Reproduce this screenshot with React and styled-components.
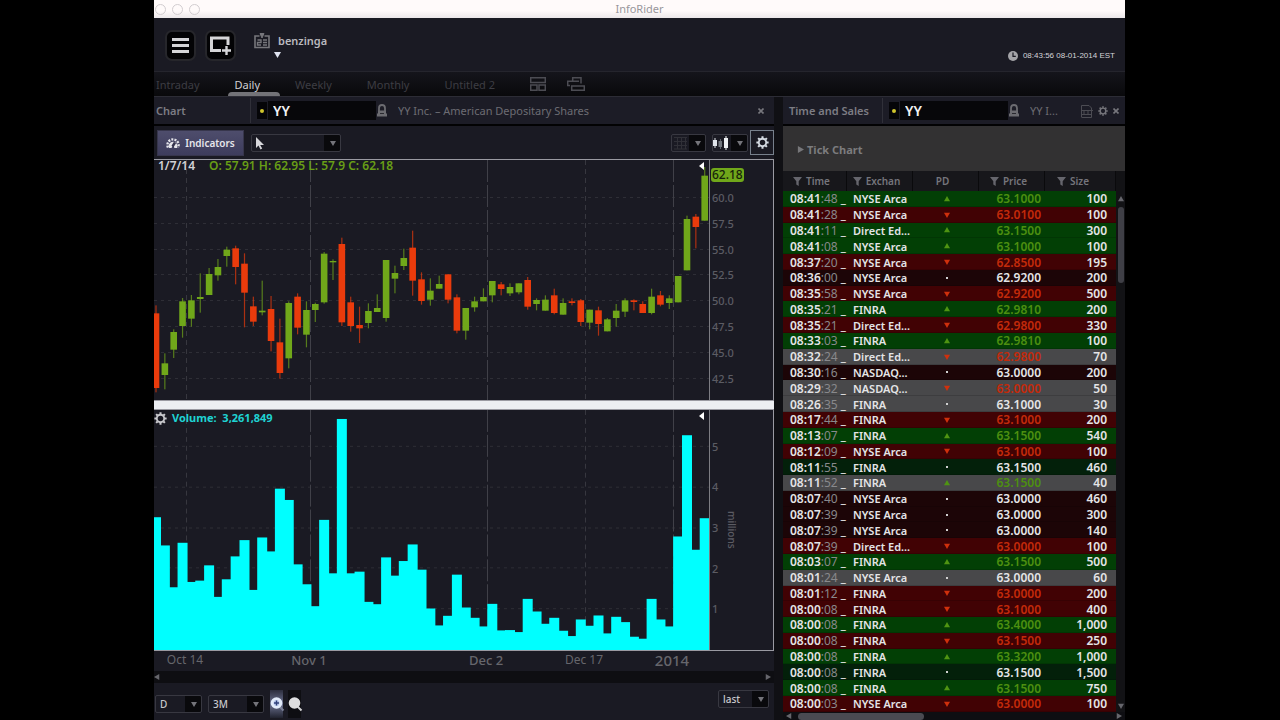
import React from "react";
import styled, { createGlobalStyle, css } from "styled-components";

const Global = createGlobalStyle`
  * { box-sizing: border-box; }
  html, body { margin: 0; background: #000; }
  body { font-family: "Noto Sans", "Open Sans", sans-serif; font-size: 11px; line-height: 16px; color: #85858c; }
  button, input, select { font: inherit; color: inherit; margin: 0; padding: 0; border: 0; background: none; }
  svg { display: block; }
`;

const GREEN = "#70a71a";
const RED = "#ea3b0c";

/* ---------- shell ---------- */
const Screen = styled.div`
  height: 100vh;
  min-height: 600px;
  padding: 0 155px 0 154px;
  display: flex;
  flex-direction: column;
  overflow: hidden;
`;
const TitleBar = styled.header`
  height: 18px;
  flex: none;
  display: grid;
  grid-template-columns: 60px 1fr 60px;
  align-items: center;
  background: linear-gradient(#fffafa 60%, #ece8ea);
  color: #98969a;
  text-align: center;
`;
const Lights = styled.div`
  display: flex;
  gap: 6px;
  padding-left: 1px;
`;
const Light = styled.span`
  width: 11px;
  height: 11px;
  border: 1px solid #d2cdd0;
  border-radius: 50%;
`;
const Header = styled.div`
  height: 54px;
  flex: none;
  display: flex;
  align-items: flex-start;
  padding: 12px 10px 0 11px;
  background: #1a1a23;
  border-bottom: 1px solid #25252d;
`;
const SquareButton = styled.button`
  width: 31px;
  height: 31px;
  margin-right: 9px;
  display: grid;
  place-items: center;
  border: 2px solid #26262b;
  border-radius: 7px;
  background: #030305;
`;
const User = styled.button`
  margin-left: 9px;
  display: grid;
  grid-template-columns: 16px auto;
  column-gap: 8px;
  align-items: center;
  color: #b9b9be;
  font-weight: 600;
  text-align: left;
  padding-top: 3px;
`;
const UserCaret = styled.span`
  grid-column: 1 / 3;
  padding: 2px 0 0 20px;
`;
const Clock = styled.div`
  margin: 20px 0 0 auto;
  display: flex;
  align-items: center;
  gap: 5px;
  font-family: "Liberation Sans Narrow", "Liberation Sans", sans-serif;
  font-size: 8px;
  line-height: 12px;
  color: #d4d4d8;
`;
const Tabs = styled.nav`
  height: 25px;
  flex: none;
  display: flex;
  align-items: center;
  gap: 35px;
  padding-left: 2px;
  background: linear-gradient(#15151b, #09090b);
  border-bottom: 1px solid #2c2c35;
`;
const Tab = styled.button`
  position: relative;
  height: 24px;
  padding-top: 1px;
  color: ${(p) => (p.$on ? "#d0d0d4" : "#3d3d43")};
  ${(p) =>
    p.$on &&
    css`
      &::after {
        content: "";
        position: absolute;
        left: -7px;
        right: -20px;
        bottom: 0;
        height: 4px;
        border-radius: 4px 4px 0 0;
        background: #737378;
      }
    `}
`;
const TabIcons = styled.div`
  display: flex;
  gap: 21px;
`;
const Body = styled.main`
  flex: 1;
  min-height: 0;
  display: grid;
  grid-template-columns: minmax(0, 620px) minmax(0, 342px);
  justify-content: space-between;
  background: #101014;
`;
const Panel = styled.section`
  min-width: 0;
  min-height: 0;
  display: flex;
  flex-direction: column;
  background: #1a1a23;
`;
const PanelHead = styled.div`
  height: 29px;
  flex: none;
  display: flex;
  align-items: center;
  padding: 0 ${(p) => (p.$wide ? 10 : 6)}px 0 ${(p) => (p.$wide ? 2 : 6)}px;
  border-bottom: 2px solid #020203;
  background: #1c1c26;
  color: #77777e;
`;
const PanelTitle = styled.h2`
  margin: 0;
  width: ${(p) => (p.$wide ? 95 : 94)}px;
  height: 25px;
  line-height: 25px;
  font-size: 11px;
  font-weight: 600;
  border-right: 1px solid #303039;
  color: #7d7d84;
  white-space: nowrap;
`;
const Status = styled.span`
  width: 10px;
  height: 17px;
  margin: 0 1px 0 6px;
  display: grid;
  place-items: center;
  background: #050508;
  &::after {
    content: "";
    width: 4px;
    height: 4px;
    border-radius: 50%;
    background: #cfc42c;
  }
`;
const Symbol = styled.input`
  width: 108px;
  height: 19px;
  padding: 0 0 0 5px;
  margin-right: 1px;
  background: #07070a;
  color: #f2f2f4;
  font-size: 14px;
  font-weight: 600;
`;
const Company = styled.span`
  flex: 1;
  min-width: 0;
  margin-left: 11px;
  white-space: nowrap;
  overflow: hidden;
  text-overflow: ellipsis;
  color: #6c6c73;
`;
const IconButton = styled.button`
  flex: none;
  margin-left: 5px;
  color: #77777d;
`;

/* ---------- chart panel ---------- */
const Tools = styled.div`
  height: 33px;
  flex: none;
  display: flex;
  align-items: center;
  padding: 0 0 0 3px;
`;
const Indicators = styled.button`
  width: 87px;
  height: 26px;
  display: flex;
  align-items: center;
  justify-content: center;
  gap: 5px;
  margin-right: 7px;
  background: linear-gradient(#4e4d6c, #3d3c5c);
  border: 1px solid #37364c;
  color: #e6e6ec;
  font-weight: 600;
  font-size: 10px;
`;
const SelectBox = styled.label`
  position: relative;
  flex: none;
  width: ${(p) => p.$w}px;
  height: 18px;
  display: flex;
  align-items: center;
  border: 1px solid #383841;
  border-radius: 2px;
  background: linear-gradient(90deg, transparent calc(100% - 16px), #09090c 0);
  margin-right: ${(p) => p.$gap ?? 0}px;
  select {
    position: absolute;
    inset: 0;
    width: 100%;
    appearance: none;
    padding-left: 4px;
    font-size: 10px;
    font-weight: 500;
    color: ${(p) => (p.$blank ? "transparent" : "#c8c8cc")};
    outline: 0;
  }
  &::after {
    content: "";
    position: absolute;
    right: 4px;
    top: 6px;
    border: 3px solid transparent;
    border-top: 5px solid #74747a;
    border-bottom: 0;
  }
`;
const ToolSpacer = styled.span`
  flex: 1;
`;
const GearButton = styled.button`
  width: 24px;
  height: 25px;
  display: grid;
  place-items: center;
  border: 1px solid #77808c;
  color: #d5dbe3;
`;
const Frame = styled.div`
  flex: 1 1 0;
  min-height: 0;
  position: relative;
  display: grid;
  grid-template-columns: minmax(0, 555px) minmax(64px, 1fr);
  border: 1px solid #9a9aa2;
  border-left: 0;
`;
const Plot = styled.svg`
  width: 100%;
  height: 100%;
`;
const Axis = styled.div`
  position: relative;
  border-left: 1px solid #7c7c82;
  color: #5c5c63;
  font-weight: 500;
`;
const Tick = styled.span`
  position: absolute;
  left: 2px;
  margin-top: -8px;
`;
const LastPrice = styled.span`
  position: absolute;
  left: 1px;
  top: 8px;
  padding: 0 1px;
  height: 14px;
  line-height: 14px;
  font-size: 12px;
  border-radius: 3px;
  background: ${GREEN};
  color: #16230a;
`;
const Unit = styled.span`
  position: absolute;
  left: 14px;
  top: 101px;
  writing-mode: vertical-rl;
  font-size: 10px;
`;
const Legend = styled.div`
  position: absolute;
  left: ${(p) => (p.$volume ? 0 : 4)}px;
  top: ${(p) => (p.$volume ? 0 : -2)}px;
  display: flex;
  align-items: center;
  gap: ${(p) => (p.$volume ? 5 : 14)}px;
  font-size: ${(p) => (p.$volume ? 11 : 12)}px;
  font-weight: ${(p) => (p.$volume ? 700 : 600)};
  white-space: pre;
  color: ${(p) => (p.$volume ? "#1fd3d3" : "#689e16")};
`;
const LegendDate = styled.span`
  color: #d2d2d6;
`;
const LegendIcon = styled.span`
  color: #c9c9cd;
`;
const Splitter = styled.div`
  height: 8px;
  flex: none;
  background: #eceef2;
`;
const Dates = styled.div`
  position: relative;
  height: 20px;
  flex: none;
`;
const DateLabel = styled.span`
  position: absolute;
  top: 1px;
  transform: translateX(-50%);
  font-size: ${(p) => ({ day: 12, month: 13, year: 15 })[p.$rank]}px;
  font-weight: ${(p) => (p.$rank === "day" ? 400 : 500)};
  color: #66666c;
`;
const ScrollTrack = styled.div`
  height: ${(p) => p.$h}px;
  flex: none;
  display: flex;
  align-items: center;
  justify-content: space-between;
  padding: 0 3px 0 ${(p) => (p.$h > 8 ? 0 : 3)}px;
  background: #0e0e12;
`;
const Footer = styled.div`
  height: 37px;
  flex: none;
  display: flex;
  align-items: center;
  padding: 5px 5px 0 1px;
`;
const RaisedSelect = styled.div`
  align-self: flex-start;
  padding-top: 2px;
`;
const ZoomButton = styled.button`
  width: 13px;
  height: 28px;
  margin-right: 5px;
  display: grid;
  place-items: center;
  background: ${(p) => (p.$on ? "linear-gradient(#2c2e3e, #6b7190, #20222e)" : "#0e0e12")};
`;

/* ---------- time and sales ---------- */
const TickChart = styled.button`
  height: 45px;
  flex: none;
  display: flex;
  align-items: center;
  gap: 3px;
  padding: 2px 0 0 14px;
  background: #323132;
  color: #7c7c7e;
  font-size: 11px;
  font-weight: 700;
`;
const TableArea = styled.div`
  flex: 1;
  min-height: 0;
  display: flex;
`;
const columns = css`
  display: grid;
  grid-template-columns: 64px 66px 66px 66px minmax(0, 1fr);
  align-items: center;
`;
const Table = styled.table`
  flex: 1;
  min-width: 0;
  display: flex;
  flex-direction: column;
  font-weight: 600;
`;
const Head = styled.thead`
  height: 20px;
  flex: none;
  tr {
    ${columns}
    background: #17171b;
  }
  th {
    height: 20px;
    display: flex;
    align-items: center;
    justify-content: center;
    gap: 4px;
    padding: 0 6px 0 0;
    font-weight: 600;
    font-size: 10px;
    border-right: 1px solid #0a0a0c;
    color: #75757c;
  }
  th:last-child {
    padding-right: 14px;
  }
`;
const Rows = styled.tbody`
  flex: 1;
  min-height: 0;
  display: flex;
  flex-direction: column;
`;
const rowFill = { G: "#023f05", R: "#410204", r: "#1c0507", g: "#03200a", w: "#48484a" };
const Row = styled.tr`
  ${columns}
  flex: 1 1 0;
  min-height: 0;
  background: ${(p) => rowFill[p.$fill]};
  box-shadow: inset 0 -1px rgba(0, 0, 0, 0.14);
`;
const Cell = styled.td`
  padding: 0 ${(p) => p.$right ?? 0}px 0 ${(p) => p.$left ?? 0}px;
  line-height: 15px;
  font-size: ${(p) => p.$size ?? 11}px;
  text-align: ${(p) => p.$align ?? "left"};
  color: ${(p) => p.$color ?? "#e4e4e6"};
  white-space: nowrap;
`;
const Seconds = styled.span`
  font-weight: 400;
  color: #89898c;
`;
const VScroll = styled.div`
  width: 9px;
  flex: none;
  display: flex;
  flex-direction: column;
  align-items: center;
  padding: 25px 0 3px;
  background: #121215;
`;
const VThumb = styled.span`
  width: 6px;
  height: 76px;
  margin: 5px 0 auto;
  border-radius: 3px;
  background: #3f3f46;
`;
const HThumb = styled.span`
  width: 126px;
  height: 7px;
  margin: 0 auto 0 6px;
  border-radius: 4px;
  background: #4a4a51;
`;

/* ---------- icons ---------- */
const Tri = ({ dir = "down", size = 6, fill = "#66666c" }) => {
  const d = { down: "M0 1H8L4 8Z", up: "M0 7H8L4 0Z", left: "M7 0V8L0 4Z", right: "M1 0V8L8 4Z" }[dir];
  return (
    <svg width={size} height={size} viewBox="0 0 8 8" aria-hidden="true">
      <path d={d} fill={fill} />
    </svg>
  );
};
const Gear = ({ size = 13 }) => (
  <svg width={size} height={size} viewBox="0 0 14 14" fill="none" stroke="currentColor" aria-hidden="true">
    <circle cx="7" cy="7" r="4" strokeWidth="2" />
    <path d="M7 .4V2.5M7 11.5V13.6M.4 7H2.5M11.5 7H13.6M2.3 2.3 3.8 3.8M10.2 10.2 11.7 11.7M2.3 11.7 3.8 10.2M10.2 3.8 11.7 2.3" strokeWidth="2.2" />
  </svg>
);
const Lock = () => (
  <svg width="10" height="13" viewBox="0 0 10 13" aria-label="Locked">
    <path d="M2 8V4.2a3 3.2 0 0 1 6 0V8" fill="none" stroke="#6c6c71" strokeWidth="1.8" />
    <path d="M1 6.5H9V9.5H10V12.5H0V9.5H1Z" fill="#6c6c71" />
    <path d="M3 9.5H7" stroke="#2a2a30" />
  </svg>
);
const Cross = () => (
  <svg width="6" height="6" viewBox="0 0 6 6" stroke="currentColor" strokeWidth="1.6" aria-hidden="true">
    <path d="M.5.5 5.5 5.5M5.5.5.5 5.5" />
  </svg>
);
const Funnel = () => (
  <svg width="9" height="9" viewBox="0 0 9 9" aria-hidden="true">
    <path d="M0 0H9L5.7 4.2V9L3.3 7.5V4.2Z" fill="#66666d" />
  </svg>
);
const Magnifier = ({ plus }) => (
  <svg width="15" height="16" viewBox="0 0 15 16" aria-hidden="true">
    <path d="M9 10 13.5 14.5" stroke={plus ? "#7c8198" : "#d4d4d6"} strokeWidth="2" />
    <circle cx="6.5" cy="7" r="5.8" fill={plus ? "#e2ebfa" : "#dededf"} />
    {plus && <circle cx="6.5" cy="7" r="3" fill="#b9c8ec" />}
    {plus && <path d="M6.5 4.5V9.5M4 7H9" stroke="#30407a" strokeWidth="1.4" />}
  </svg>
);

/* ---------- data ---------- */
/* side, then body top, body bottom, wick top, wick bottom in thirds of a plot unit */
const CANDLES = [
  "R 400 624 376 637", "G 550 585 520 628", "G 456 509 448 534", "G 364 438 354 473", "G 361 416 345 440",
  "G 351 357 280 398", "G 282 345 264 345", "G 261 286 237 302", "G 209 228 200 260", "R 205 261 197 313",
  "R 251 338 220 442", "R 379 425 350 438", "G 392 397 302 406", "R 387 483 348 514", "R 487 579 416 596",
  "G 369 535 364 565", "R 350 443 340 463", "G 390 464 364 502", "G 372 390 368 426", "G 221 367 216 371",
  "G 243 247 238 300", "R 192 427 173 438", "R 367 438 350 455", "R 435 445 380 489", "G 393 429 370 445",
  "G 384 396 343 396", "G 240 414 240 425", "G 279 296 257 340", "G 234 258 206 270", "R 203 302 152 347",
  "R 298 363 277 374", "G 332 359 295 377", "G 312 326 287 326", "R 283 359 283 370", "R 352 452 343 460",
  "G 384 452 384 479", "G 364 382 350 395", "G 351 364 325 364", "G 303 346 303 367", "R 313 327 306 346",
  "G 321 340 310 348", "G 310 337 310 343", "R 300 380 291 389", "G 360 372 355 391", "G 359 392 346 392",
  "R 346 399 326 403", "G 369 404 355 404", "R 364 369 355 376", "R 361 426 357 438", "G 389 428 389 448",
  "R 391 432 380 467", "G 418 454 414 454", "G 392 414 372 440", "G 361 395 355 411", "R 361 366 358 391",
  "R 372 399 364 399", "G 350 399 326 403", "R 346 374 333 379", "G 355 369 346 387", "G 288 367 288 367",
  "G 117 271 107 271", "R 110 141 102 205", "G -13 122 -39 122",
].map((s) => {
  const [side, ...v] = s.split(" ");
  const [top, bottom, high, low] = v.map((n) => 20 + n / 3);
  return { side, top, bottom, high, low };
});
const VOLUMES = [
  350, 435, 561, 427, 545, 541, 495, 590, 537, 468, 419, 569, 411, 453, 264, 298, 492, 552, 618, 358, 519, 54, 519,
  514, 605, 612, 471, 526, 482, 432, 508, 625, 676, 647, 523, 622, 653, 679, 611, 691, 690, 696, 596, 634, 671, 653,
  692, 708, 658, 677, 646, 700, 650, 666, 710, 716, 596, 658, 679, 408, 103, 448, 353,
];
const centre = (i) => 2 + i * 8.85;
const PRICES = [60, 57.5, 55, 52.5, 50, 47.5, 45, 42.5].map((p) => ({ p, y: 38 + (60 - p) * 10.33 }));
const MILLIONS = [5, 4, 3, 2, 1].map((m) => ({ m, y: 37 + (5 - m) * 40.8 }));
const DATES = [
  { x: 31, text: "Oct 14", rank: "day" },
  { x: 155, text: "Nov 1", rank: "month" },
  { x: 332, text: "Dec 2", rank: "month" },
  { x: 430, text: "Dec 17", rank: "day" },
  { x: 518, text: "2014", rank: "year" },
];
const TRADES = `08:41:48|NYSE Arca|up|63.1000|100|G
08:41:28|NYSE Arca|down|63.0100|100|R
08:41:11|Direct Ed...|up|63.1500|300|G
08:41:08|NYSE Arca|up|63.1000|100|G
08:37:20|NYSE Arca|down|62.8500|195|R
08:36:00|NYSE Arca|flat|62.9200|200|r
08:35:58|NYSE Arca|down|62.9200|500|R
08:35:21|FINRA|up|62.9810|200|G
08:35:21|Direct Ed...|down|62.9800|330|R
08:33:03|FINRA|up|62.9810|100|G
08:32:24|Direct Ed...|down|62.9800|70|w
08:30:16|NASDAQ...|flat|63.0000|200|r
08:29:32|NASDAQ...|down|63.0000|50|w
08:26:35|FINRA|flat|63.1000|30|w
08:17:44|FINRA|down|63.1000|200|R
08:13:07|FINRA|up|63.1500|540|G
08:12:09|NYSE Arca|down|63.1000|100|R
08:11:55|FINRA|flat|63.1500|460|g
08:11:52|FINRA|up|63.1500|40|w
08:07:40|NYSE Arca|flat|63.0000|460|r
08:07:39|NYSE Arca|flat|63.0000|300|r
08:07:39|NYSE Arca|flat|63.0000|140|r
08:07:39|Direct Ed...|down|63.0000|100|R
08:03:07|FINRA|up|63.1500|500|G
08:01:24|NYSE Arca|flat|63.0000|60|w
08:01:12|FINRA|down|63.0000|200|R
08:00:08|FINRA|down|63.1000|400|R
08:00:08|FINRA|up|63.4000|1,000|G
08:00:08|FINRA|down|63.1500|250|R
08:00:08|FINRA|up|63.3200|1,000|G
08:00:08|FINRA|flat|63.1500|1,500|g
08:00:08|FINRA|up|63.1500|750|G
08:00:03|NYSE Arca|down|63.0000|100|R`
  .split("\n")
  .map((l) => l.split("|"));

const TONE = { up: "#4d8f10", down: "#c32a0a", flat: "#e4e4e6" };

const Grid = ({ lines }) => (
  <g stroke="#2e2e36" strokeWidth="1">
    {lines.map((y) => (
      <line key={y} x1="0" x2="555" y1={Math.round(y) - 0.5} y2={Math.round(y) - 0.5} strokeDasharray="3 4" />
    ))}
    <path d="M32.5 0V242M431.5 0V242" strokeDasharray="5 4" stroke="#37373f" />
    <path d="M156.5 0V242M333.5 0V242M519.5 0V242" strokeDasharray="22 3" stroke="#404048" />
  </g>
);

const PriceChart = () => (
  <Frame>
    <Plot viewBox="0 0 555 240" preserveAspectRatio="none" role="img" aria-label="Daily price candles">
      <Grid lines={PRICES.map((t) => t.y)} />
      {CANDLES.map((c, i) => {
        const fill = c.side === "G" ? GREEN : RED;
        return (
          <g key={i} fill={fill}>
            <rect x={centre(i) - 0.6} y={c.high} width="1.2" height={c.low - c.high} opacity="0.7" />
            <rect x={centre(i) - 3.3} y={c.top} width="6.6" height={c.bottom - c.top} />
          </g>
        );
      })}
      <path d="M550 2V10L545 6Z" fill="#fff" />
    </Plot>
    <Axis>
      <LastPrice>62.18</LastPrice>
      {PRICES.map((t) => (
        <Tick key={t.p} style={{ top: `${(t.y / 240) * 100}%` }}>
          {t.p.toFixed(1)}
        </Tick>
      ))}
    </Axis>
    <Legend>
      <LegendDate>1/7/14</LegendDate>
      <span>O: 57.91 H: 62.95 L: 57.9 C: 62.18</span>
    </Legend>
  </Frame>
);

const VolumeChart = () => (
  <Frame>
    <Plot viewBox="0 0 555 241" preserveAspectRatio="none" role="img" aria-label="Daily volume bars">
      <Grid lines={MILLIONS.map((t) => t.y)} />
      <g fill="#00ffff">
        {VOLUMES.map((v, i) => {
          const y = v / 3 - 9;
          return <rect key={i} x={centre(i) - 5} y={y} width="10" height={241 - y} />;
        })}
      </g>
      <path d="M550 2V10L545 6Z" fill="#fff" />
    </Plot>
    <Axis>
      {MILLIONS.map((t) => (
        <Tick key={t.m} style={{ top: `${(t.y / 241) * 100}%` }}>
          {t.m}
        </Tick>
      ))}
      <Unit>millions</Unit>
    </Axis>
    <Legend $volume>
      <LegendIcon>
        <Gear size={13} />
      </LegendIcon>
      <span>Volume:  3,261,849</span>
    </Legend>
  </Frame>
);

const Select = ({ label, value, width, gap, blank, children }) => (
  <SelectBox $w={width} $gap={gap} $blank={blank}>
    {children}
    <select aria-label={label} defaultValue={value}>
      <option>{value}</option>
    </select>
  </SelectBox>
);

const ChartPanel = () => (
  <Panel>
    <PanelHead $wide>
      <PanelTitle $wide>Chart</PanelTitle>
      <Status />
      <Symbol aria-label="Chart symbol" defaultValue="YY" />
      <Lock />
      <Company>YY Inc. – American Depositary Shares</Company>
      <IconButton aria-label="Close chart">
        <Cross />
      </IconButton>
    </PanelHead>
    <Tools>
      <Indicators>
        <svg width="14" height="13" viewBox="0 0 14 13" aria-hidden="true">
          <path d="M2 11.5A5.6 5.6 0 1 1 12 11.5" fill="none" stroke="#e4e4ea" strokeWidth="2.4" strokeDasharray="2 1.2" />
          <path d="M3 12A4.4 4.4 0 1 1 11 12H8.5L7 9 5.5 12Z" fill="#e4e4ea" />
          <path d="M6.5 10.5 9 6.5" stroke="#33324c" strokeWidth="2.4" />
        </svg>
        Indicators
      </Indicators>
      <Select label="Pointer tool" value="Pointer" width={90} blank>
        <svg width="14" height="14" viewBox="0 0 14 14" aria-hidden="true">
          <path d="M4 1V12L6.5 9.5 8.5 13.5 10.2 12.6 8.2 9H12Z" fill="#d8d8dc" />
        </svg>
      </Select>
      <ToolSpacer />
      <Select label="Grid" value="Grid" width={35} gap={6} blank>
        <svg width="16" height="14" viewBox="0 0 16 14" stroke="#303037" aria-hidden="true">
          <path d="M2 1.5H15M2 5.5H15M2 9.5H15M2 13H15M5.5 1V13M9.5 1V13M13.5 1V13" />
        </svg>
      </Select>
      <Select label="Chart type" value="Candles" width={36} gap={2} blank>
        <svg width="16" height="14" viewBox="0 0 16 14" aria-hidden="true">
          <path d="M0 4H4V10H0ZM1.5 2H2.5V12H1.5Z" fill="#dfe4ea" />
          <path d="M5.5 5H9V11H5.5ZM7 3H7.8V13H7Z" fill="#70757d" />
          <path d="M11 2H15V12H11ZM12.5 0H13.5V14H12.5Z" fill="#eef1f4" />
        </svg>
      </Select>
      <GearButton aria-label="Chart settings">
        <Gear size={13} />
      </GearButton>
    </Tools>
    <PriceChart />
    <Splitter />
    <VolumeChart />
    <Dates>
      {DATES.map((d) => (
        <DateLabel key={d.text} $rank={d.rank} style={{ left: `${(d.x / 620) * 100}%` }}>
          {d.text}
        </DateLabel>
      ))}
    </Dates>
    <ScrollTrack $h={12}>
      <Tri dir="left" />
      <Tri dir="right" />
    </ScrollTrack>
    <Footer>
      <Select label="Interval" value="D" width={47} gap={6} />
      <Select label="Range" value="3M" width={56} gap={6} />
      <ZoomButton $on aria-label="Zoom in">
        <Magnifier plus />
      </ZoomButton>
      <ZoomButton aria-label="Zoom out">
        <Magnifier />
      </ZoomButton>
      <ToolSpacer />
      <RaisedSelect>
        <Select label="Price source" value="last" width={51} />
      </RaisedSelect>
    </Footer>
  </Panel>
);

const Trade = ({ row: [time, venue, move, price, size, fill] }) => (
  <Row $fill={fill}>
    <Cell $size={12} $left={7}>
      {time.slice(0, 5)}
      <Seconds>{time.slice(5)}</Seconds> _
    </Cell>
    <Cell $left={6}>{venue}</Cell>
    <Cell $left={31}>
      {move === "flat" ? (
        <svg width="6" height="6" viewBox="0 0 6 6" aria-label="flat">
          <rect x="2" y="2" width="2" height="2" fill="#d0d0d0" />
        </svg>
      ) : (
        <Tri dir={move} size={6} fill={move === "up" ? "#4f9412" : "#d0300c"} />
      )}
    </Cell>
    <Cell $size={12} $align="right" $right={4} $color={TONE[move]}>
      {price}
    </Cell>
    <Cell $size={12} $align="right" $right={9}>
      {size}
    </Cell>
  </Row>
);

const SalesPanel = () => (
  <Panel>
    <PanelHead>
      <PanelTitle>Time and Sales</PanelTitle>
      <Status />
      <Symbol aria-label="Sales symbol" defaultValue="YY" />
      <Lock />
      <Company>YY I...</Company>
      <IconButton aria-label="Export">
        <svg width="13" height="14" viewBox="0 0 13 14" fill="none" stroke="#4c4c53" aria-hidden="true">
          <path d="M1.5 13V1.5H9L11.5 4V13.5H1.5M1 6.5H13M1 10.5H12M4 6.5V10.5M8 6.5V10.5" />
        </svg>
      </IconButton>
      <IconButton aria-label="Settings">
        <Gear size={10} />
      </IconButton>
      <IconButton aria-label="Close">
        <Cross />
      </IconButton>
    </PanelHead>
    <TickChart>
      <Tri dir="right" size={7} fill="#77777a" />
      Tick Chart
    </TickChart>
    <TableArea>
      <Table>
        <Head>
          <tr>
            <th scope="col"><Funnel />Time</th>
            <th scope="col"><Funnel />Exchan</th>
            <th scope="col">PD</th>
            <th scope="col"><Funnel />Price</th>
            <th scope="col"><Funnel />Size</th>
          </tr>
        </Head>
        <Rows>
          {TRADES.map((t, i) => (
            <Trade key={i} row={t} />
          ))}
        </Rows>
      </Table>
      <VScroll>
        <Tri dir="up" />
        <VThumb />
        <Tri dir="down" />
      </VScroll>
    </TableArea>
    <ScrollTrack $h={8}>
      <Tri dir="left" />
      <HThumb />
      <Tri dir="right" />
    </ScrollTrack>
  </Panel>
);

export default function App() {
  return (
    <>
      <Global />
      <Screen>
        <TitleBar>
          <Lights>
            <Light />
            <Light />
            <Light />
          </Lights>
          <span>InfoRider</span>
        </TitleBar>
        <Header>
          <SquareButton aria-label="Menu">
            <svg width="17" height="17" viewBox="0 0 17 17" aria-hidden="true">
              <path d="M0 2.5H17M0 8.5H17M0 14.5H17" stroke="#d5d5d8" strokeWidth="3" />
            </svg>
          </SquareButton>
          <SquareButton aria-label="Add window">
            <svg width="23" height="19" viewBox="0 0 23 19" fill="none" stroke="#d5d5d8" aria-hidden="true">
              <path d="M12 14.5H2.5V2H19V9" strokeWidth="3" />
              <path d="M17.5 10V19M13 14.5H22" strokeWidth="2.4" />
            </svg>
          </SquareButton>
          <User>
            <svg width="16" height="16" viewBox="0 0 16 16" fill="none" stroke="#77777c" aria-hidden="true">
              <path d="M5.5 3H1V14.5H15V3H10.5" strokeWidth="1.6" />
              <path d="M6 .5H10L8 5Z" fill="#77777c" />
              <path d="M3.5 7H7V9.5H3.5V12H7M9 7H13M9 9.5H13M9 12H13" strokeWidth="1.4" />
            </svg>
            benzinga
            <UserCaret>
              <Tri dir="down" size={7} fill="#dfe3f0" />
            </UserCaret>
          </User>
          <Clock>
            <svg width="10" height="10" viewBox="0 0 10 10" aria-hidden="true">
              <circle cx="5" cy="5" r="5" fill="#a4a4a8" />
              <path d="M5 1.5V5.3H7.8" fill="none" stroke="#1a1a23" strokeWidth="1.2" />
            </svg>
            08:43:56 08-01-2014 EST
          </Clock>
        </Header>
        <Tabs>
          <Tab>Intraday</Tab>
          <Tab $on>Daily</Tab>
          <Tab>Weekly</Tab>
          <Tab>Monthly</Tab>
          <Tab>Untitled 2</Tab>
          <TabIcons>
            <svg width="16" height="14" viewBox="0 0 16 14" fill="none" stroke="#4c4c53" strokeWidth="1.5" aria-hidden="true">
              <path d="M.7.7H15.3V5.5H.7ZM.7 8H7V13.3H.7ZM9 8H15.3V13.3H9Z" />
            </svg>
            <svg width="18" height="14" viewBox="0 0 18 14" fill="none" stroke="#4c4c53" strokeWidth="1.5" aria-hidden="true">
              <path d="M5.7 4V.7H14V6.5M3 8.5H.7V4.3H12M4.7 9H17.3V13.3H4.7Z" />
            </svg>
          </TabIcons>
        </Tabs>
        <Body>
          <ChartPanel />
          <SalesPanel />
        </Body>
      </Screen>
    </>
  );
}
